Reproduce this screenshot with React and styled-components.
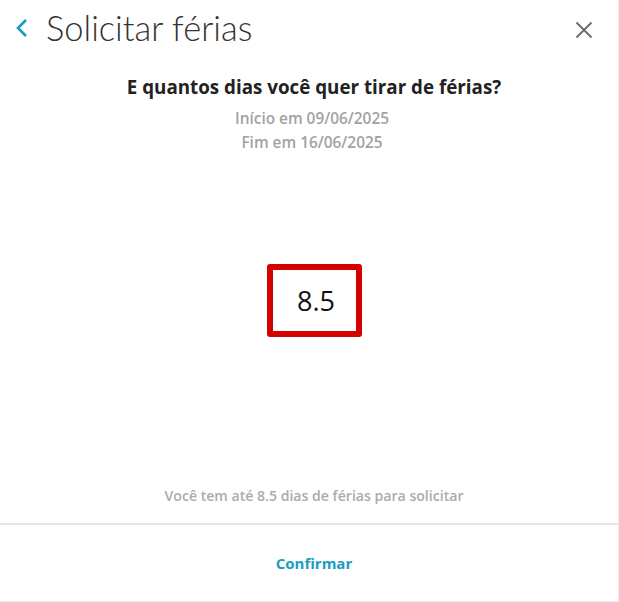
import React from 'react'
import styled, { createGlobalStyle } from 'styled-components'

const Global = createGlobalStyle`
  html, body, #root { margin: 0; padding: 0; height: 100%; }
  body { background: #ffffff; font-family: "Open Sans", Lato, sans-serif; }
`

const Modal = styled.div`
  box-sizing: border-box;
  height: 602px;
  width: 619px;
  display: flex;
  flex-direction: column;
  border-right: 1px solid #efefef;
  border-bottom: 1px solid #efefef;
`

const Header = styled.div`
  height: 58px;
  display: flex;
  align-items: center;
  padding: 0 22px 0 12px;
`

const BackButton = styled.button`
  border: 0;
  background: none;
  padding: 0;
  width: 20px;
  height: 24px;
  display: flex;
  align-items: center;
  justify-content: center;
  margin-top: -2px;
`

const Title = styled.h1`
  margin: -4px 0 0 14px;
  font-family: Lato, sans-serif;
  font-weight: 300;
  font-size: 34.5px;
  color: #333333;
  flex: 1;
`

const CloseButton = styled.button`
  border: 0;
  background: none;
  padding: 0;
  width: 24px;
  height: 24px;
  display: flex;
  align-items: center;
  justify-content: center;
  margin-top: 2px;
`

const Body = styled.div`
  flex: 1;
  display: flex;
  flex-direction: column;
  align-items: center;
  padding-top: 16px;
`

const Question = styled.h2`
  margin: 0 0 0 10px;
  font-size: 18.8px;
  font-weight: 700;
  color: #222222;
`

const Dates = styled.div`
  margin-top: 8px;
  display: flex;
  flex-direction: column;
  align-items: center;
  gap: 2px;
  font-size: 15.4px;
  font-weight: 600;
  color: #a2a2a2;
  line-height: 22px;
  margin-left: 6px;
`

const Center = styled.div`
  flex: 1;
  display: flex;
  align-items: center;
  justify-content: center;
  padding-bottom: 40px;
`

const DaysBox = styled.div`
  box-sizing: border-box;
  width: 95px;
  height: 73px;
  margin-left: 10px;
  border: 6px solid #d40000;
  border-radius: 3px;
  display: flex;
  align-items: center;
  justify-content: center;
  padding-left: 4px;
  font-family: "Open Sans", sans-serif;
  font-size: 27px;
  color: #111111;
`

const Note = styled.div`
  font-size: 14.1px;
  font-weight: 600;
  color: #a7adad;
  padding-bottom: 18px;
  margin-left: 10px;
`

const Footer = styled.div`
  height: 76px;
  border-top: 2px solid #e6e6e6;
  display: flex;
  align-items: center;
  justify-content: center;
`

const Confirm = styled.button`
  border: 0;
  background: none;
  font-family: "Open Sans", sans-serif;
  font-weight: 700;
  font-size: 15px;
  color: #1a9cc4;
  margin-left: 10px;
`

export default function App() {
  return (
    <>
      <Global />
      <Modal>
        <Header>
          <BackButton aria-label="Voltar">
            <svg width="14" height="20" viewBox="0 0 14 20">
              <path d="M11 2 L3 10 L11 18" fill="none" stroke="#1a9cc4" strokeWidth="2.6" />
            </svg>
          </BackButton>
          <Title>Solicitar férias</Title>
          <CloseButton aria-label="Fechar">
            <svg width="18" height="18" viewBox="0 0 18 18">
              <path d="M1.5 1.5 L16.5 16.5 M16.5 1.5 L1.5 16.5" stroke="#6e6e6e" strokeWidth="2" />
            </svg>
          </CloseButton>
        </Header>
        <Body>
          <Question>E quantos dias você quer tirar de férias?</Question>
          <Dates>
            <span>Início em 09/06/2025</span>
            <span>Fim em 16/06/2025</span>
          </Dates>
          <Center>
            <DaysBox>8.5</DaysBox>
          </Center>
          <Note>Você tem até 8.5 dias de férias para solicitar</Note>
        </Body>
        <Footer>
          <Confirm>Confirmar</Confirm>
        </Footer>
      </Modal>
    </>
  )
}
